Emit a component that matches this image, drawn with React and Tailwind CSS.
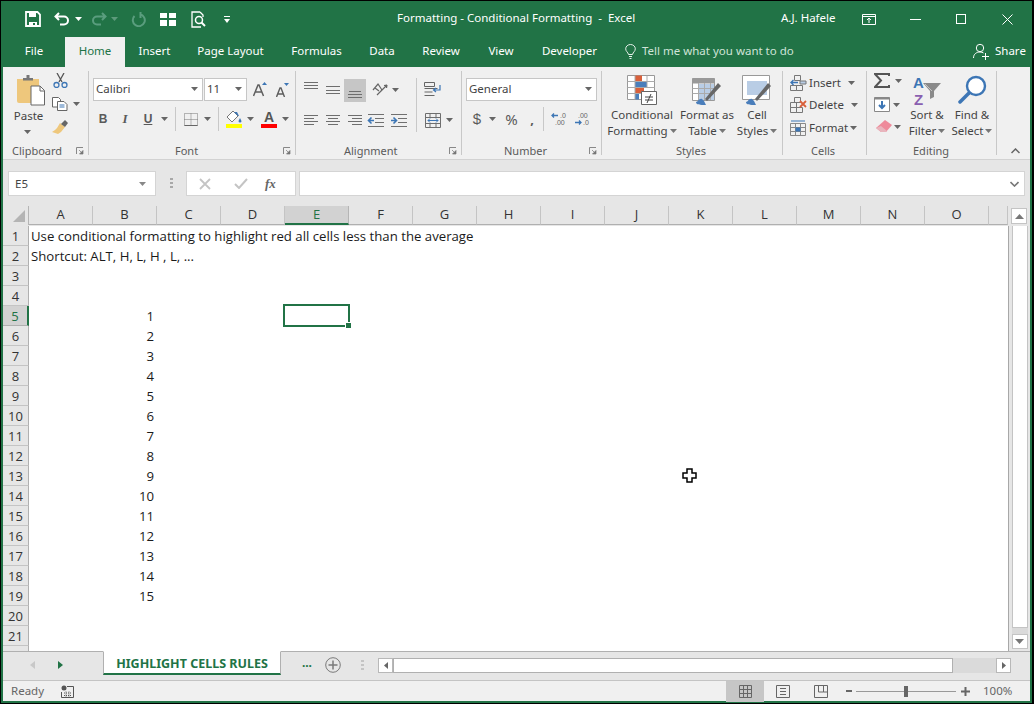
import React from "react";

const Caret = ({ c = "#666", className = "" }) => (
  <svg width="7" height="4" viewBox="0 0 7 4" className={"shrink-0 " + className}><path d="M0 0h7L3.5 4z" fill={c} /></svg>
);

const Launcher = ({ className = "" }) => (
  <svg width="8" height="8" viewBox="0 0 8 8" className={"shrink-0 " + className}>
    <path d="M.5 7V.5H7" fill="none" stroke="#888" />
    <path d="M3 3l3 3M7 3.5V7H3.5z" fill="#777" stroke="#777" strokeWidth=".7" />
  </svg>
);

const Group = ({ w, children, label, lm, lr = "mr-[4px]", launcher = true }) => (
  <div className={"flex flex-col h-[84px] shrink-0 border-r border-[#c8c8c8] " + w}>
    <div className="h-[76px] relative">{children}</div>
    <div className="h-[8px] flex items-center text-[11px] text-[#5a5a5a]">
      <span className={"leading-[16px] " + lm}>{label}</span>
      {launcher && <Launcher className={"ml-auto " + lr} />}
    </div>
  </div>
);

const Lines = ({ ls }) => (
  <svg width="16" height="16" viewBox="0 0 16 16">
    {ls.map((l, i) => <path key={i} d={`M${l[0]} ${l[2]}.5H${l[1]}`} stroke="#6e6e6e" fill="none" />)}
  </svg>
);

const IndentL = ({ dir }) => (
  <svg width="17" height="14" viewBox="0 0 17 14">
    {[1, 5, 9, 13].map((y, i) => <path key={i} d={`M${(i === 1 || i === 2) ? 8 : 1} ${y}.5H17`} stroke="#707070" />)}
    <path d={dir === "l" ? "M7 7.5H2M4.5 4.5L1.5 7.5l3 3" : "M1 7.5h5M3.5 4.500l3 3-3 3"} stroke="#3d76b5" strokeWidth="1.6" fill="none" />
  </svg>
);

const RowN = [1, 2, 3, 4, 5, 6, 7, 8, 9, 10, 11, 12, 13, 14, 15, 16, 17, 18, 19, 20, 21, 22];
const Cols = ["A", "B", "C", "D", "E", "F", "G", "H", "I", "J", "K", "L", "M", "N", "O"];

const cellText = { 1: "Use conditional formatting to highlight red all cells less than the average", 2: "Shortcut: ALT, H, L, H , L, ..." };

export default function App() {
  return (
    <div className="w-[1034px] h-[704px] overflow-hidden bg-black pt-px pb-px pl-px pr-[2px] font-['Noto_Sans',sans-serif]">
      <div className="w-[1031px] h-[702px] flex flex-col border-x-2 border-b-2 border-[#217346] bg-[#e6e6e6]">
        {/* title bar */}
        <div className="h-[36px] shrink-0 bg-[#217346] flex items-center text-white text-[11.5px] -mx-[2px]">
          <svg width="16" height="16" viewBox="0 0 16 16" className="ml-[24px]"><path d="M1 1h11.500L15 3.500V15H1z" fill="none" stroke="#fff" strokeWidth="1.800" /><path d="M4 1.500h7V6H4zM4 11h8v4H4z" fill="#fff" /><path d="M8 12h2v2H8z" fill="#217346" /></svg>
          <svg width="16" height="14" viewBox="0 0 16 14" className="ml-[13px]"><path d="M5 1L1.500 4.500 5 8M2 4.500h8a4 4 0 0 1 0 8H6" fill="none" stroke="#fff" strokeWidth="2" /></svg>
          <Caret c="#fff" className="ml-[5px]" />
          <svg width="16" height="14" viewBox="0 0 16 14" className="ml-[9px] opacity-30"><path d="M11 1l3.500 3.500L11 8M14 4.500H6a4 4 0 0 0 0 8h4" fill="none" stroke="#dff" strokeWidth="2" /></svg>
          <Caret c="#5d9a7b" className="ml-[4px]" />
          <svg width="15" height="15" viewBox="0 0 15 15" className="ml-[13px] opacity-30"><path d="M9 2.300A6 6 0 1 1 3.500 4M9.500 0v5h-1" fill="none" stroke="#dff" strokeWidth="2" /></svg>
          <svg width="16" height="13" viewBox="0 0 16 13" className="ml-[14px]"><path d="M0 0h7v5H0zM9 0h7v5H9zM0 7h7v6H0zM9 7h7v6H9z" fill="#fff" /></svg>
          <svg width="15" height="17" viewBox="0 0 15 17" className="ml-[15px]"><path d="M9 1H1v15h9M9 1l3 3v2" fill="none" stroke="#fff" strokeWidth="1.300" /><circle cx="8" cy="9" r="3.500" fill="none" stroke="#fff" strokeWidth="1.500" /><path d="M10.500 11.500l3.500 3.500" stroke="#fff" strokeWidth="2" /></svg>
          <svg width="6" height="7" viewBox="0 0 6 7" className="ml-[18px]"><path d="M0 0h6v1H0zM0 3h6L3 7z" fill="#fff" /></svg>
          <span className="ml-[167px] mb-[2px] whitespace-pre w-[240px]">Formatting - Conditional Formatting  -  Excel</span>
          <span className="ml-[144px] mb-[2px] w-[60px]">A.J. Hafele</span>
          <svg width="14" height="11" viewBox="0 0 14 11" className="ml-[21px]"><path d="M.5 .5h13v10H.5zM.5 2.500h13M7 9V4M5 6l2-2 2 2" fill="none" stroke="#fff" /></svg>
          <div className="ml-[34px] w-[11px] h-px bg-white" />
          <div className="ml-[35px] w-[10px] h-[10px] border border-white" />
          <svg width="11" height="11" viewBox="0 0 11 11" className="ml-[36px]"><path d="M.5 .5l10 10M10.500 .5l-10 10" stroke="#fff" /></svg>
        </div>
        {/* tabs */}
        <div className="h-[30px] shrink-0 bg-[#217346] flex items-stretch text-[11.5px] text-white -mx-[2px] pl-[2px]">
          <div className="w-[62px] pb-[2px] flex items-center justify-center">File</div>
          <div className="w-[60px] pb-[2px] flex items-center justify-center bg-[#f0f0f0] text-[#217346]">Home</div>
          <div className="w-[59px] pb-[2px] flex items-center justify-center">Insert</div>
          <div className="w-[93px] pb-[2px] flex items-center justify-center">Page Layout</div>
          <div className="w-[79px] pb-[2px] flex items-center justify-center">Formulas</div>
          <div className="w-[52px] pb-[2px] flex items-center justify-center">Data</div>
          <div className="w-[66px] pb-[2px] flex items-center justify-center">Review</div>
          <div className="w-[54px] pb-[2px] flex items-center justify-center">View</div>
          <div className="w-[83px] pb-[2px] flex items-center justify-center">Developer</div>
          <div className="flex items-center pb-[2px] ml-[14px] text-[#cfe3d8]">
            <svg width="11" height="15" viewBox="0 0 11 15"><path d="M3.500 10.500C3 8 .7 7.500 .7 4.800a4.800 4.300 0 0 1 9.600 0c0 2.700-2.300 3.200-2.800 5.700zM4 12.500h3M4.500 14.500h2" fill="none" stroke="#e6f0ea" /></svg>
            <span className="ml-[6px] w-[152px] whitespace-nowrap">Tell me what you want to do</span>
          </div>
          <div className="flex items-center pb-[2px] ml-[179px]">
            <svg width="17" height="17" viewBox="0 0 17 17"><circle cx="7" cy="5" r="3.700" fill="none" stroke="#fff" /><path d="M.5 15c0-4 3-6 6.500-6 1.500 0 2.500.4 3.500 1M9 13.500h7M12.500 10v7" fill="none" stroke="#fff" /></svg>
            <span className="ml-[5px]">Share</span>
          </div>
        </div>
        {/* ribbon */}
        <div className="h-[93px] shrink-0 bg-[#f0f0f0] border-b border-[#d2d2d2] flex pt-[4px] relative">
          <Group w="w-[86px]" label="Clipboard" lm="ml-[9px]">
            <div className="flex h-full">
              <div className="w-[41px] ml-[7px] flex flex-col items-center text-[11.5px] text-[#444]">
                <svg width="29" height="31" viewBox="0 0 29 31" className="mt-[4px]">
                  <path d="M1 4h22v24H3a2 2 0 0 1-2-2z" fill="#eec77c" />
                  <path d="M7 5V3h3.500V0h3v3H17v2.500H7z" fill="#777" />
                  <path d="M15 11h9l4.500 4.500V30H15z" fill="#fff" stroke="#666" />
                  <path d="M24 11v5h4.500" fill="none" stroke="#666" />
                </svg>
                <span className="mt-[2px] leading-[16px] -ml-[4px]">Paste</span>
                <Caret className="mt-[6px] -ml-[6px]" />
              </div>
              <div className="ml-[1px] flex flex-col">
                <svg width="15" height="15" viewBox="0 0 15 15" className="mt-[2px] ml-[1px]"><path d="M4 0l5 9M11 0L6 9" stroke="#555" strokeWidth="1.300" /><circle cx="3.500" cy="12" r="2.500" fill="none" stroke="#3d76b5" strokeWidth="1.300" /><circle cx="11.500" cy="12" r="2.500" fill="none" stroke="#3d76b5" strokeWidth="1.300" /></svg>
                <div className="flex items-center mt-[9px]">
                  <svg width="16" height="14" viewBox="0 0 16 14"><path d="M.5 .5h6l2 2V10H.5z" fill="#fff" stroke="#666" /><path d="M5.500 4.500H12l3 3v6H5.500z" fill="#fff" stroke="#666" /><path d="M7.500 8h5M7.500 10h5" stroke="#3d76b5" /></svg>
                  <Caret className="ml-[5px]" />
                </div>
                <svg width="17" height="14" viewBox="0 0 17 14" className="mt-[9px]"><path d="M8 3l5 4-4 5-3 2-6-2 3-2 2-2z" fill="#eec77c" /><path d="M9 4l4-4 3 3-3 4z" fill="#666" /></svg>
              </div>
            </div>
          </Group>
          <Group w="w-[207px]" label="Font" lm="ml-[86px]">
            <div className="flex items-center mt-[7px] ml-[4px]">
              <div className="w-[110px] h-[23px] pb-px bg-white border border-[#c6c6c6] flex items-center px-[2px] text-[11.5px] text-[#444]"><span>Calibri</span><Caret className="ml-auto mr-[2px]" /></div>
              <div className="ml-[1px] w-[43px] h-[23px] pb-px bg-white border border-[#c6c6c6] flex items-center px-[2px] text-[11.5px] text-[#444]"><span>11</span><Caret className="ml-auto mr-[2px]" /></div>
              <svg width="15" height="15" viewBox="0 0 15 15" className="ml-[6px]"><path d="M.5 14L5 3h1l4.500 11M2.500 10h6" fill="none" stroke="#5e5e5e" strokeWidth="1.500" /><path d="M9 3l2.500-3L14 3z" fill="#3d76b5" /></svg>
              <svg width="13" height="14" viewBox="0 0 13 14" className="ml-[8px]"><path d="M.5 14L4 5h1l3.500 9M2 11h5" fill="none" stroke="#5e5e5e" strokeWidth="1.400" /><path d="M8 0h5l-2.500 3z" fill="#3d76b5" /></svg>
            </div>
            <div className="flex items-center h-[24px] mt-[6px] ml-[4px] text-[#5a5a5a]">
              <div className="w-[20px] text-center text-[12px] font-bold font-['Liberation_Sans',sans-serif]">B</div>
              <div className="w-[24px] text-center text-[13px] italic font-bold font-['Liberation_Serif',serif]">I</div>
              <div className="w-[22px] text-center text-[12px] font-bold underline font-['Liberation_Sans',sans-serif]">U</div>
              <div className="w-[11px] flex justify-center"><Caret /></div>
              <div className="ml-[5px] w-px h-[24px] bg-[#c8c8c8]" />
              <div className="ml-[8px]">
                <svg width="14" height="13" viewBox="0 0 14 13"><path d="M.5 .5h13v12H.500zM7 .5v12M.5 6.500h13" fill="none" stroke="#777" strokeDasharray="1 1" /><path d="M.5 12.500h13" stroke="#666" /></svg>
              </div>
              <Caret className="ml-[6px]" />
              <div className="ml-[7px] w-px h-[24px] bg-[#c8c8c8]" />
              <div className="ml-[7px] flex flex-col">
                <svg width="16" height="13" viewBox="0 0 16 13"><path d="M7 0L1 6l5 5 6-6z" fill="#fff" stroke="#777" /><path d="M8 1h3l2 4h-1zM14 7l1.500 3a1.500 1.500 0 0 1-3 0z" fill="#3d76b5" /></svg>
                <div className="w-[16px] h-[4px] bg-[#ffff00]" />
              </div>
              <Caret className="ml-[5px]" />
              <div className="ml-[7px] flex flex-col items-center">
                <span className="text-[14px] leading-[13px] font-bold text-[#555] font-['Liberation_Sans',sans-serif]">A</span>
                <div className="w-[16px] h-[4px] bg-[#ff0000]" />
              </div>
              <Caret className="ml-[5px]" />
            </div>
          </Group>
          <Group w="w-[166px]" label="Alignment" lm="ml-[48px]">
            <div className="flex mt-[7px] ml-[4px] items-center">
              <div className="w-[22px] h-[23px] flex items-start justify-center pt-[2px]"><Lines ls={[[1, 15, 1], [1, 15, 4], [1, 15, 7]]} /></div>
              <div className="w-[22px] h-[23px] flex items-center justify-center"><Lines ls={[[1, 15, 4], [1, 15, 8], [1, 15, 11]]} /></div>
              <div className="w-[22px] h-[23px] flex items-center justify-center bg-[#c6c6c6]"><Lines ls={[[2, 14, 9], [1, 15, 12], [1, 15, 15]]} /></div>
              <svg width="17" height="17" viewBox="0 0 17 17" className="ml-[6px]"><path d="M1 8l5-6 4 6M3 6l4 3M5 13L15 3M15 3l-3 .5M15 3l-.5 3" fill="none" stroke="#666" strokeWidth="1.200" /></svg>
              <Caret className="ml-[3px]" />
              <div className="ml-[17px] w-px h-[54px] bg-[#c8c8c8] -mb-[30px] self-start" />
              <svg width="17" height="16" viewBox="0 0 17 16" className="ml-[7px]"><path d="M.5 .5h10v4H.5zM.5 6.500h13M.5 10h8M.5 13.500h10" fill="none" stroke="#666" /><path d="M16 3v5h-6M12 6l-2.500 2 2.500 2" fill="none" stroke="#3d76b5" strokeWidth="1.200" /></svg>
            </div>
            <div className="flex items-center h-[24px] mt-[6px] ml-[4px]">
              <div className="w-[22px] flex justify-center"><Lines ls={[[1, 15, 3], [1, 11, 6], [1, 15, 9], [1, 11, 12]]} /></div>
              <div className="w-[22px] flex justify-center"><Lines ls={[[1, 15, 3], [3, 13, 6], [1, 15, 9], [3, 13, 12]]} /></div>
              <div className="w-[22px] flex justify-center"><Lines ls={[[1, 15, 3], [5, 15, 6], [1, 15, 9], [5, 15, 12]]} /></div>
              <div className="w-[20px] ml-[-1px] flex justify-center"><IndentL dir="l" /></div>
              <div className="w-[22px] ml-[2px] flex justify-center"><IndentL dir="r" /></div>
              <svg width="16" height="15" viewBox="0 0 16 15" className="ml-[16px]"><path d="M.5 .5h15v14H.5zM.5 4.500h15M.5 10.500h15M5 .5v4M11 .5v4M5 10.500v4M11 10.500v4" fill="none" stroke="#6e6e6e" /><path d="M3 7.500h10M5 5.500l-2 2 2 2M11 5.500l2 2-2 2" fill="none" stroke="#3d76b5" /></svg>
              <Caret className="ml-[5px]" />
            </div>
          </Group>
          <Group w="w-[140px]" label="Number" lm="ml-[42px]">
            <div className="mt-[7px] ml-[4px] w-[131px] h-[23px] pb-px bg-white border border-[#c6c6c6] flex items-center px-[2px] text-[11.5px] text-[#444]"><span>General</span><Caret className="ml-auto mr-[2px]" /></div>
            <div className="flex items-center h-[24px] mt-[6px] ml-[4px] text-[#5a5a5a]">
              <div className="w-[22px] text-center text-[15px] font-['Liberation_Sans',sans-serif]">$</div>
              <Caret className="ml-[1px]" />
              <div className="w-[27px] ml-[2px] text-center text-[15px]">%</div>
              <div className="w-[14px] text-center text-[13px] font-bold leading-[12px]">,</div>
              <div className="ml-[4px] w-px h-[24px] bg-[#c8c8c8]" />
              <svg width="17" height="14" viewBox="0 0 17 14" className="ml-[7px] overflow-visible"><path d="M7 3.500H1M3 1.500L1 3.500l2 2" fill="none" stroke="#3d76b5" strokeWidth="1.300" /><text x="9" y="6" fontSize="7" fill="#666" fontFamily="Liberation Sans">.0</text><text x="4" y="13" fontSize="7" fill="#666" fontFamily="Liberation Sans">.00</text></svg>
              <svg width="16" height="14" viewBox="0 0 16 14" className="ml-[7px] overflow-visible"><text x="3" y="6" fontSize="7" fill="#666" fontFamily="Liberation Sans">.00</text><path d="M0 10.500h6M4 8.500l2 2-2 2" fill="none" stroke="#3d76b5" strokeWidth="1.300" /><text x="8" y="13" fontSize="7" fill="#666" fontFamily="Liberation Sans">.0</text></svg>
            </div>
          </Group>
          <Group w="w-[181px]" label="Styles" lm="ml-[74px]" launcher={false}>
            <div className="flex h-full text-[11.5px] leading-[16px] text-[#444] text-center">
              <div className="ml-[2px] w-[76px] flex flex-col items-center">
                <svg width="30" height="30" viewBox="0 0 30 30" className="mt-[4px]">
                  <path d="M.5 .5h27v24H.5z" fill="#fff" stroke="#999" />
                  <path d="M8 .5h7v6H8z" fill="#d9603b" /><path d="M8 6.500h12v6H8z" fill="#4a7ebb" /><path d="M8 12.500h9v6H8z" fill="#d9603b" /><path d="M8 18.500h4v6H8z" fill="#4a7ebb" />
                  <path d="M8 .5v24M.5 6.500h27M.5 12.500h27M.5 18.500h27M20 .5v12" stroke="#aaa" fill="none" />
                  <path d="M14.500 16.500h15v13h-15z" fill="#fff" stroke="#666" />
                  <path d="M18 22h8M18 25h8M24 19l-4 9" stroke="#444" fill="none" />
                </svg>
                <span className="mt-[2px]">Conditional</span>
                <span className="flex items-center">Formatting<Caret c="#777" className="ml-[2px]" /></span>
              </div>
              <div className="w-[52px] ml-[1px] flex flex-col items-center whitespace-nowrap">
                <svg width="30" height="30" viewBox="0 0 30 30" className="mt-[4px]">
                  <path d="M.5 3.500h22v22H.5z" fill="#fff" stroke="#999" />
                  <path d="M.5 3.500h22v5H.5z" fill="#999" /><path d="M6 9h16v16H6z" fill="#b9cde5" />
                  <path d="M.5 13.500h22M.5 18.500h22M6.500 8v17M12.500 8v17M18.500 8v17" stroke="#aaa" fill="none" />
                  <path d="M14 30c-6 0-10 0-10-3 2 0 3-4 6-3l2 2z" fill="#4a7ebb" /><path d="M13 24L26 8l3 3-14 15z" fill="#666" />
                </svg>
                <span className="mt-[2px]">Format as</span>
                <span className="flex items-center">Table<Caret c="#777" className="ml-[2px]" /></span>
              </div>
              <div className="w-[48px] flex flex-col items-center ml-[0px]">
                <svg width="30" height="30" viewBox="0 0 30 30" className="mt-[4px]">
                  <path d="M.5 .5h27v24H.5z" fill="#fff" stroke="#999" />
                  <path d="M5 6h20v14H5z" fill="#b9cde5" />
                  <path d="M14 30c-6 0-10 0-10-3 2 0 3-4 6-3l2 2z" fill="#4a7ebb" /><path d="M13 24L26 8l3 3-14 15z" fill="#666" />
                </svg>
                <span className="mt-[2px]">Cell</span>
                <span className="flex items-center">Styles<Caret c="#777" className="ml-[2px]" /></span>
              </div>
            </div>
          </Group>
          <Group w="w-[84px]" label="Cells" lm="ml-[28px]" launcher={false}>
            <div className="flex flex-col pl-[7px] pt-[3px] text-[11.5px] text-[#444] leading-[16px]">
              <div className="flex items-center h-[16px] mt-[1px]">
                <svg width="17" height="16" viewBox="0 0 17 16"><path d="M4.500 .5h6v5h-6zM.5 10.500h6v5h-6zM6.500 10.500h6v5h-6z" fill="none" stroke="#777" /><path d="M8 7.500H1M3.500 5L1 7.500 3.500 10" fill="none" stroke="#3d76b5" strokeWidth="1.400" /><path d="M10 6h6v3h-6z" fill="#b9cde5" stroke="#777" /></svg>
                <span className="ml-[2px] w-[31px] -mt-px">Insert</span><Caret className="ml-[8px]" />
              </div>
              <div className="flex items-center h-[16px] mt-[6px]">
                <svg width="17" height="16" viewBox="0 0 17 16"><path d="M4.500 .5h6v5h-6zM.5 10.500h6v5h-6zM6.500 10.500h6v5h-6zM.5 5.500h6v5h-6z" fill="none" stroke="#777" /><path d="M10 4l6 6M16 4l-6 6" stroke="#d9603b" strokeWidth="1.800" /></svg>
                <span className="ml-[2px] w-[36px] -mt-px">Delete</span><Caret className="ml-[6px]" />
              </div>
              <div className="flex items-center h-[16px] mt-[7px]">
                <svg width="16" height="16" viewBox="0 0 16 16"><path d="M.5 3.500h15v12H.5zM.5 7.500h15M.5 11.500h15M5.500 3.500v12M10.500 3.500v12" fill="none" stroke="#888" /><path d="M5.500 7.500h5v4h-5z" fill="#3d76b5" /><path d="M1 1h14" stroke="#3d76b5" /></svg>
                <span className="ml-[3px] w-[39px] -mt-px">Format</span><Caret className="ml-[2px]" />
              </div>
            </div>
          </Group>
          <Group w="w-[130px]" label="Editing" lm="ml-[46px]" launcher={false}>
            <div className="flex text-[11.5px] leading-[16px] text-[#444] text-center">
              <div className="flex flex-col ml-[7px] w-[30px]">
                <div className="flex items-center mt-[2px]">
                  <svg width="16" height="15" viewBox="0 0 16 15"><path d="M15 3V1H1l6 6.500L1 14h14v-2" fill="none" stroke="#555" strokeWidth="2" /></svg>
                  <Caret className="ml-[5px]" />
                </div>
                <div className="flex items-center mt-[9px]">
                  <svg width="16" height="15" viewBox="0 0 16 15"><path d="M.5 .5h15v14H.5z" fill="#fff" stroke="#888" /><path d="M.5 .5h15v2H.5z" fill="#888" /><path d="M8 4v7M5 8l3 3 3-3" fill="none" stroke="#3d76b5" strokeWidth="2" /></svg>
                  <Caret className="ml-[3px]" />
                </div>
                <div className="flex items-center mt-[8px] ml-[1px]">
                  <svg width="17" height="13" viewBox="0 0 17 13"><path d="M10 0l7 5-6 7H6L1 8z" fill="#ee8a9a" /><path d="M1 8l5 4h5l1-1-6-5z" fill="#e8b5bd" /></svg>
                  <Caret className="ml-[2px]" />
                </div>
              </div>
              <div className="w-[52px] ml-[-3px] flex flex-col items-center">
                <svg width="30" height="30" viewBox="0 0 30 30" className="mt-[4px] overflow-visible">
                  <path d="M11 8h18l-7 8v6l-4 2v-8z" fill="#8a8a8a" /><path d="M13 9l7 7" stroke="#c4c4c4" />
                  <text x="1" y="13" fontSize="15" fontWeight="700" fill="#3d76b5" fontFamily="Liberation Sans">A</text>
                  <text x="2" y="30" fontSize="15" fontWeight="700" fill="#8a5fb0" fontFamily="Liberation Sans">Z</text>
                </svg>
                <span className="mt-[2px] whitespace-nowrap">Sort &amp;</span>
                <span className="flex items-center">Filter<Caret c="#777" className="ml-[2px]" /></span>
              </div>
              <div className="w-[46px] ml-[-4px] flex flex-col items-center">
                <svg width="29" height="30" viewBox="0 0 29 30" className="mt-[4px]">
                  <circle cx="18" cy="11" r="9" fill="#fff" stroke="#3d76b5" strokeWidth="2.400" />
                  <path d="M11 18L2 27" stroke="#3d76b5" strokeWidth="3.500" strokeLinecap="round" />
                </svg>
                <span className="mt-[2px] whitespace-nowrap">Find &amp;</span>
                <span className="flex items-center">Select<Caret c="#777" className="ml-[2px]" /></span>
              </div>
            </div>
          </Group>
          <svg width="9" height="6" viewBox="0 0 9 6" className="ml-[14px] mt-[77px]"><path d="M.5 5l4-4 4 4" fill="none" stroke="#666" strokeWidth="1.500" /></svg>
        </div>
        {/* formula bar */}
        <div className="h-[46px] shrink-0 flex items-start pt-[11px] pl-[5px] text-[11.5px] text-[#444]">
          <div className="w-[148px] h-[25px] bg-white border border-[#d4d4d4] flex items-center pl-[6px] pr-[9px]"><span>E5</span><Caret c="#888" className="ml-auto" /></div>
          <svg width="3" height="11" viewBox="0 0 3 11" className="ml-[14px] mt-[7px]"><path d="M0 0h3v2H0zM0 4h3v2H0zM0 8h3v2H0z" fill="#a8a8a8" /></svg>
          <div className="ml-[13px] w-[110px] h-[25px] bg-white border border-[#d4d4d4] flex items-center">
            <svg width="12" height="12" viewBox="0 0 12 12" className="ml-[12px]"><path d="M1 1l10 10M11 1L1 11" stroke="#c4c4c4" strokeWidth="1.800" /></svg>
            <svg width="14" height="11" viewBox="0 0 14 11" className="ml-[23px]"><path d="M1 6l4 4 8-9" fill="none" stroke="#c4c4c4" strokeWidth="2" /></svg>
            <span className="ml-[17px] italic font-bold text-[13px] text-[#666] font-['Liberation_Serif',serif]">fx</span>
          </div>
          <div className="ml-[3px] flex-1 mr-[5px] h-[25px] bg-white border border-[#d4d4d4] flex items-center justify-end pr-[5px]">
            <svg width="9" height="6" viewBox="0 0 9 6"><path d="M.5 1l4 4 4-4" fill="none" stroke="#777" strokeWidth="1.600" /></svg>
          </div>
        </div>
        {/* column header */}
        <div className="h-[20px] shrink-0 flex text-[13px] text-[#333] font-['Open_Sans',sans-serif]">
          <div className="w-[26px] h-[19px] flex items-end justify-end pr-[3px] pb-[3px] border-r border-[#b5b5b5]">
            <svg width="12" height="12" viewBox="0 0 12 12"><path d="M12 0v12H0z" fill="#b4b4b4" /></svg>
          </div>
          {Cols.map((c) => (
            <div key={c} className={c === "E" ? "w-[64px] h-[19px] flex items-center justify-center bg-[#d2d2d2] border-b-2 border-[#217346] text-[#217346] border-r border-r-[#b5b5b5]" : "w-[64px] h-[19px] flex items-center justify-center border-r border-[#c4c4c4] border-b border-b-[#b0b0b0]"}>{c}</div>
          ))}
          <div className="w-[19px] h-[19px] border-r border-[#c4c4c4] border-b border-b-[#b0b0b0]" />
          <div className="flex-1 flex justify-center">
            <div className="w-[16px] h-[16px] mt-[2px] bg-white border border-[#c4c4c4] flex items-center justify-center"><svg width="9" height="5" viewBox="0 0 9 5"><path d="M0 5l4.500-5L9 5z" fill="#777" /></svg></div>
          </div>
        </div>
        {/* sheet */}
        <div className="h-[425px] shrink-0 flex relative overflow-hidden">
          <div className="w-[26px] shrink-0 flex flex-col text-[13px] text-[#333] font-['Open_Sans',sans-serif]">
            {RowN.map((r) => (
              <div key={r} className={r === 5 ? "h-[20px] shrink-0 flex items-center justify-center pt-[2px] bg-[#d2d2d2] border-r-2 border-[#217346] border-b border-b-[#b0b0b0] text-[#217346]" : "h-[20px] shrink-0 flex items-center justify-center pt-[2px] border-r border-[#b0b0b0] border-b border-b-[#c4c4c4]"}>{r <= 21 ? r : ""}</div>
            ))}
          </div>
          <div className="w-[980px] shrink-0 bg-white border-r border-[#a8a8a8] flex flex-col text-[13.2px] text-[#1a1a1a] font-['Open_Sans',sans-serif] relative">
            {RowN.map((r) => (
              <div key={r} className="h-[20px] shrink-0 flex items-center pt-[2px]">
                {cellText[r] ? (
                  <span className="pl-[2px] whitespace-nowrap">{cellText[r]}</span>
                ) : r >= 5 && r <= 19 ? (
                  <span className="w-[125px] text-right">{r - 4}</span>
                ) : null}
              </div>
            ))}
            <div className="absolute left-[254px] top-[78px] w-[67px] h-[23px] border-2 border-[#217346]">
              <div className="absolute right-[-4px] bottom-[-4px] w-[5px] h-[5px] bg-[#217346] border border-white box-content" />
            </div>
            <svg width="15" height="15" viewBox="0 0 15 15" className="absolute left-[653px] top-[242px]"><path d="M5 1h5v4h4v5h-4v4H5v-4H1V5h4z" fill="#fff" stroke="#000" strokeWidth="1.500" /></svg>
          </div>
          <div className="flex-1 flex flex-col items-center">
            <div className="w-[16px] h-[402px] bg-white border-x border-b border-[#c4c4c4]" />
            <div className="w-[16px] flex-1 bg-[#dadada]" />
            <div className="w-[16px] h-[15px] bg-white border border-[#c4c4c4] flex items-center justify-center"><svg width="9" height="5" viewBox="0 0 9 5"><path d="M0 0h9L4.500 5z" fill="#777" /></svg></div>
            <div className="h-[2px]" />
          </div>
        </div>
        {/* sheet tabs */}
        <div className="h-[29px] shrink-0 flex items-start border-t border-[#b0b0b0] text-[12px]">
          <div className="w-[100px] shrink-0 h-[26px] flex items-center">
            <svg width="5" height="8" viewBox="0 0 5 8" className="ml-[27px]"><path d="M5 0v8L0 4z" fill="#c8c8c8" /></svg>
            <svg width="5" height="8" viewBox="0 0 5 8" className="ml-[23px]"><path d="M0 0v8l5-4z" fill="#217346" /></svg>
          </div>
          <div className="w-[178px] shrink-0 h-[24px] -mt-px pt-[3px] bg-white border-x border-[#b0b0b0] border-b-2 border-b-[#217346] border-t border-t-white flex items-center justify-center font-bold text-[#217346] text-[12.5px] whitespace-nowrap">HIGHLIGHT CELLS RULES</div>
          <div className="w-[31px] shrink-0 h-[22px] flex items-center justify-end font-bold text-[#217346]">...</div>
          <svg width="16" height="16" viewBox="0 0 16 16" className="ml-[13px] mt-[5px] shrink-0"><circle cx="8" cy="8" r="7.300" fill="none" stroke="#7a7a7a" /><path d="M8 3.500v9M3.500 8h9" stroke="#7a7a7a" strokeWidth="1.500" /></svg>
          <svg width="3" height="11" viewBox="0 0 3 11" className="ml-[20px] mt-[8px] shrink-0"><path d="M0 0h3v2H0zM0 4h3v2H0zM0 8h3v2H0z" fill="#c4c4c4" /></svg>
          <div className="ml-[14px] mt-[6px] flex items-center h-[15px] shrink-0">
            <div className="w-[15px] h-[15px] bg-white border border-[#b8b8b8] flex items-center justify-center"><svg width="4" height="7" viewBox="0 0 4 7"><path d="M4 0v7L0 3.500z" fill="#666" /></svg></div>
            <div className="w-[560px] h-[15px] bg-white border border-[#b0b0b0]" />
            <div className="w-[43px] h-[15px] bg-[#dadada]" />
            <div className="w-[15px] h-[15px] bg-white border border-[#b8b8b8] flex items-center justify-center"><svg width="4" height="7" viewBox="0 0 4 7"><path d="M0 0v7l4-3.500z" fill="#666" /></svg></div>
          </div>
        </div>
        {/* status bar */}
        <div className="h-[21px] shrink-0 bg-[#f0f0f0] border-t border-[#c4c4c4] flex items-center text-[11.5px] text-[#666]">
          <span className="ml-[8px] w-[38px]">Ready</span>
          <svg width="13" height="13" viewBox="0 0 13 13" className="ml-[12px]"><circle cx="3" cy="3" r="2.500" fill="#555" /><path d="M6 1.500h6.500v11H.5V7" fill="none" stroke="#555" /><path d="M3 8h8M3 10.500h8M5 6.500v6M8 6.500v6" stroke="#555" strokeDasharray="1 1" /></svg>
          <div className="ml-[652px] w-[38px] h-[21px] bg-[#c6c6c6] flex items-center justify-center">
            <svg width="13" height="13" viewBox="0 0 13 13"><path d="M.5 .5h12v12H.5zM.5 4.500h12M.5 8.500h12M4.500 .5v12M8.500 .5v12" fill="none" stroke="#666" /></svg>
          </div>
          <svg width="14" height="13" viewBox="0 0 14 13" className="ml-[12px]"><path d="M.5 .5h13v12H.5z" fill="none" stroke="#666" /><path d="M4 3.500h6M4 6.500h6M4 9.500h6" stroke="#666" /></svg>
          <svg width="14" height="13" viewBox="0 0 14 13" className="ml-[24px]"><path d="M.5 .5h13v12H.5zM4.500 .5V7h5V.5M9.500 7H13" fill="none" stroke="#666" /></svg>
          <div className="ml-[18px] w-[6px] h-[2px] bg-[#666]" />
          <div className="ml-[4px] w-[100px] h-[1px] bg-[#999] flex items-center justify-center">
            <div className="w-[4px] h-[11px] bg-[#666] shrink-0" />
          </div>
          <svg width="9" height="9" viewBox="0 0 9 9" className="ml-[5px]"><path d="M0 4.500h9M4.500 0v9" stroke="#666" strokeWidth="2" /></svg>
          <span className="ml-[13px]">100%</span>
        </div>
      </div>
    </div>
  );
}
